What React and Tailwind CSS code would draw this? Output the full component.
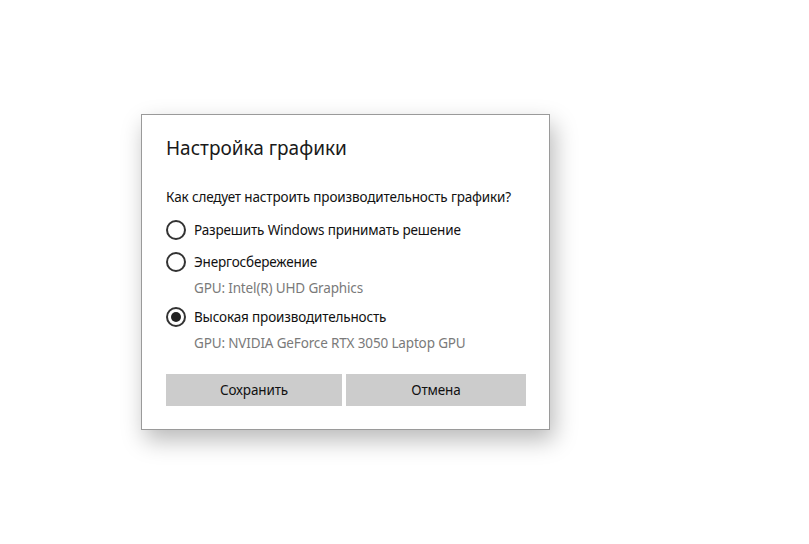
export default function App() {
  const font = { fontFamily: '"Noto Sans", "Open Sans", sans-serif' };
  const Radio = ({ checked }) => (
    <div className="w-[20px] h-[20px] rounded-full border-2 border-[#333333] flex items-center justify-center shrink-0">
      {checked && <div className="w-[10px] h-[10px] rounded-full bg-[#222222]" />}
    </div>
  );
  return (
    <div className="w-[809px] h-[544px] bg-white relative overflow-hidden" style={font}>
      <div className="absolute left-[141px] top-[114px] w-[409px] h-[316px] bg-white border border-[#9a9a9a] shadow-[4px_10px_22px_rgba(0,0,0,0.28)] flex flex-col pl-[24px] pt-[19px] text-[#111111] tracking-[-0.15px]">
        <div className="h-[28px] leading-[28px] text-[19px] text-[#1a1a1a] tracking-normal">Настройка графики</div>
        <div className="mt-[25px] h-[20px] leading-[20px] text-[13.5px]">Как следует настроить производительность графики?</div>
        <div className="mt-[11px] h-[24px] flex items-center gap-[8px]">
          <Radio />
          <span className="text-[13.5px] leading-[20px]">Разрешить Windows принимать решение</span>
        </div>
        <div className="mt-[8px] h-[24px] flex items-center gap-[8px]">
          <Radio />
          <span className="text-[13.5px] leading-[20px]">Энергосбережение</span>
        </div>
        <div className="mt-[4px] h-[20px] leading-[20px] pl-[28px] text-[13.5px] text-[#7a7a7a]">GPU: Intel(R) UHD Graphics</div>
        <div className="mt-[7px] h-[24px] flex items-center gap-[8px]">
          <Radio checked />
          <span className="text-[13.5px] leading-[20px]">Высокая производительность</span>
        </div>
        <div className="mt-[4px] h-[20px] leading-[20px] pl-[28px] text-[13.5px] text-[#7a7a7a]">GPU: NVIDIA GeForce RTX 3050 Laptop GPU</div>
        <div className="mt-[21px] flex gap-[4px]">
          <div className="w-[176px] h-[32px] bg-[#cccccc] flex items-center justify-center text-[13.5px]">Сохранить</div>
          <div className="w-[180px] h-[32px] bg-[#cccccc] flex items-center justify-center text-[13.5px]">Отмена</div>
        </div>
      </div>
    </div>
  );
}
